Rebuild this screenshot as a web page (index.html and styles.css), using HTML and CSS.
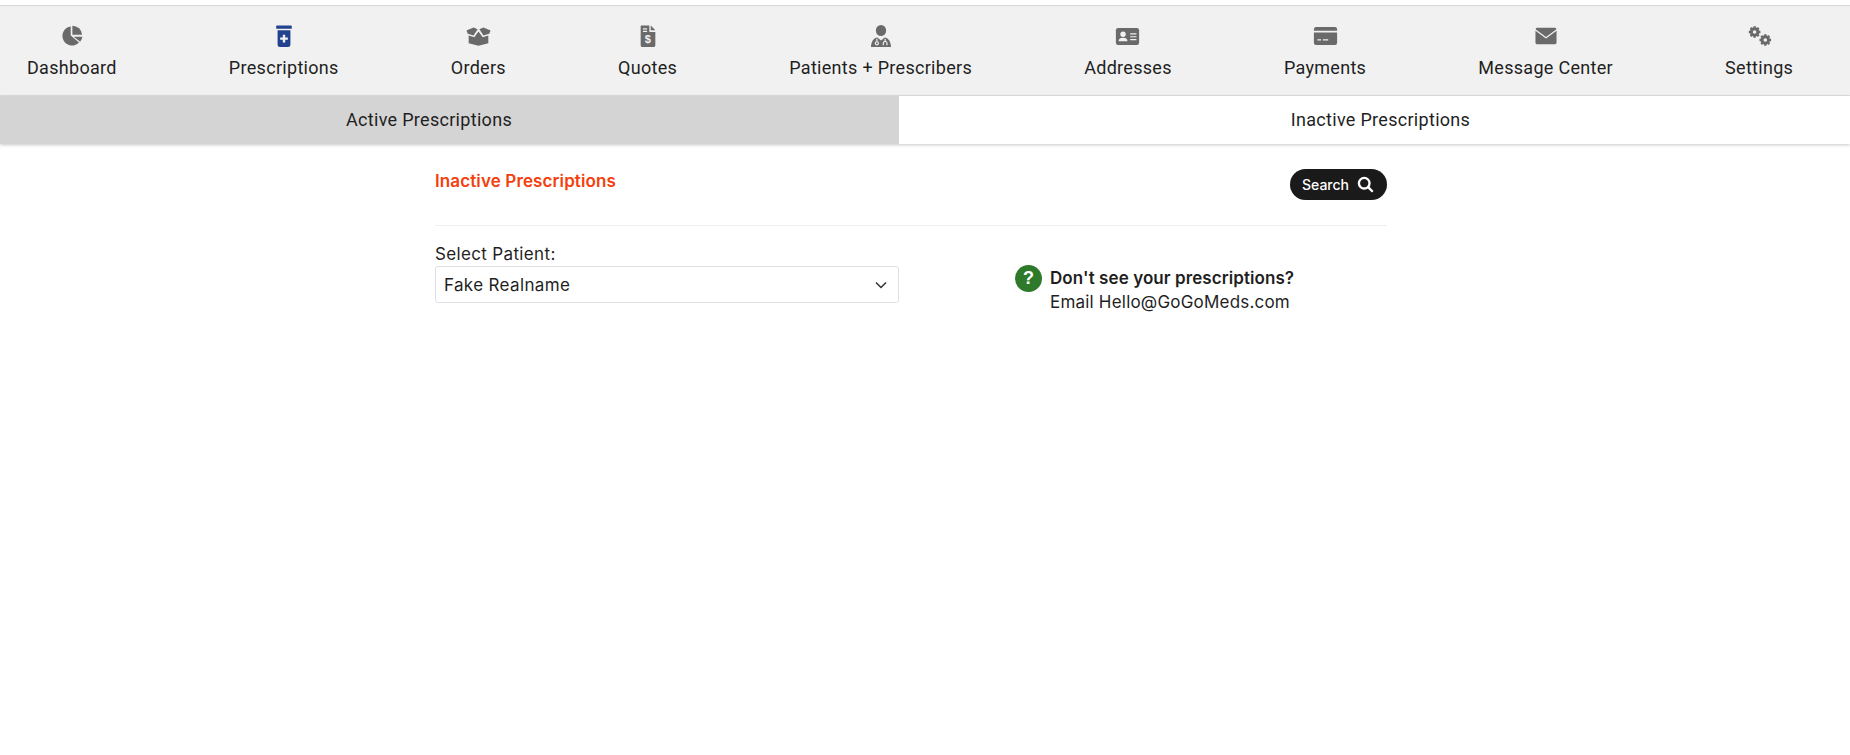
FILE: index.html
```html
<!DOCTYPE html>
<html lang="en">
<head>
<meta charset="utf-8">
<title>Inactive Prescriptions</title>
<link rel="stylesheet" href="styles.css">
</head>
<body>
<nav class="nav">
  <a class="nav-item"><svg class="icon" viewBox="0 0 24 24"><path d="M10.600 1.500A10.500 10.500 0 1 0 19.600 19.200L10.600 11.500Z"/><path d="M12.400 0.800A10.600 10.600 0 0 1 23 10.600H12.400Z"/><path d="M13.800 12.800H23.400A10.600 10.600 0 0 1 20.900 18.200Z"/></svg><span>Dashboard</span></a>
  <a class="nav-item active"><svg class="icon" viewBox="0 0 24 24"><rect x="3.500" y="0.500" width="17" height="3.600" rx="0.600"/><path d="M5 5.600H19V21.500A2.500 2.500 0 0 1 16.500 24H7.500A2.500 2.500 0 0 1 5 21.500Z"/><path class="cut" d="M10.700 10.500H13.300V13.500H16.200V16.100H13.300V19H10.700V16.100H7.800V13.500H10.700Z"/></svg><span>Prescriptions</span></a>
  <a class="nav-item"><svg class="icon icon-wide" viewBox="0 0 28 24"><path d="M1 5.500 8.500 2.500 13 4.500 8.500 11.500 2 9.500 0.600 6Z"/><path d="M27 5.500 19.500 2.500 15 4.500 19.500 11.500 26 9.500 27.400 6Z"/><path d="M3 11.500 9.300 13.400 14 7 18.700 13.400 25 11.500V20L14 23 3 20Z"/></svg><span>Orders</span></a>
  <a class="nav-item"><svg class="icon" viewBox="0 0 24 24"><path d="M4.500 0.500H13.500V7.500H20V22A2 2 0 0 1 18 24H6A2 2 0 0 1 4 22V1Z"/><path d="M15 0.500 20 5.800H15Z"/><path class="cut" d="M6.500 3.500H11V4.800H6.500ZM6.500 6.300H11V7.600H6.500Z"/><text class="dollar" x="12" y="20">$</text></svg><span>Quotes</span></a>
  <a class="nav-item"><svg class="icon" viewBox="0 0 24 24"><ellipse cx="12" cy="6" rx="5.600" ry="6"/><path d="M8 13.500 12 17 16 13.500C20 14 22.500 17.500 23 24H1C1.500 17.500 4 14 8 13.500Z"/><path class="cut-line" d="M7.500 15V18M16.500 15V18"/><circle class="cut-line" cx="7.500" cy="20" r="1.700"/><path class="cut-line" d="M14.500 22V20A2 2 0 0 1 18.500 20V22"/></svg><span>Patients + Prescribers</span></a>
  <a class="nav-item"><svg class="icon icon-wide" viewBox="0 0 28 24"><rect x="1" y="3" width="26" height="19" rx="2.500"/><circle class="cut" cx="9" cy="10" r="3"/><path class="cut" d="M4 18C4 15 6 14 9 14S14 15 14 18Z"/><path class="cut" d="M17 9H24V10.300H17ZM17 12.200H24V13.500H17ZM17 15.400H24V16.700H17Z"/></svg><span>Addresses</span></a>
  <a class="nav-item"><svg class="icon icon-wide" viewBox="0 0 28 24"><path d="M3.500 2H24.500A2.500 2.500 0 0 1 27 4.500V6H1V4.500A2.500 2.500 0 0 1 3.500 2Z"/><path d="M1 8H27V19.500A2.500 2.500 0 0 1 24.500 22H3.500A2.500 2.500 0 0 1 1 19.500Z"/><path class="cut" d="M5 15.500H9V17H5ZM11 15.500H17V17H11Z"/></svg><span>Payments</span></a>
  <a class="nav-item"><svg class="icon icon-env" viewBox="0 0 24 20"><path d="M2.500 1H21.500A2 2 0 0 1 23.400 2.500L12 11 0.600 2.500A2 2 0 0 1 2.500 1Z"/><path d="M0.500 4.300 12 12.800 23.500 4.300V17A2 2 0 0 1 21.500 19H2.500A2 2 0 0 1 0.500 17Z"/></svg><span>Message Center</span></a>
  <a class="nav-item"><svg class="icon icon-wide" viewBox="0 0 28 24"><g class="gear"><circle cx="8.500" cy="7.500" r="4"/><path d="M8.500 1V14M2 7.500H15M3.900 2.900 13.100 12.100M13.100 2.900 3.900 12.100"/></g><g class="gear"><circle cx="20.500" cy="16.500" r="4"/><path d="M20.500 10V23M14 16.500H27M15.900 11.900 25.100 21.100M25.100 11.900 15.900 21.100"/></g><circle class="cut" cx="8.500" cy="7.500" r="2"/><circle class="cut" cx="20.500" cy="16.500" r="2"/></svg><span>Settings</span></a>
</nav>
<div class="tabs">
  <a class="tab tab-off">Active Prescriptions</a>
  <a class="tab tab-on">Inactive Prescriptions</a>
</div>
<main class="content">
  <header class="head">
    <h1 class="title">Inactive Prescriptions</h1>
    <button class="search" type="button">Search
      <svg class="search-icon" viewBox="0 0 16 16"><circle cx="6.800" cy="6.800" r="5"/><path d="M10.500 10.500 14.800 14.800"/></svg>
    </button>
  </header>
  <section class="row">
    <div class="field">
      <label class="label">Select Patient:</label>
      <div class="select"><span>Fake Realname</span><svg class="chev" viewBox="0 0 12 8"><path d="M1 1.500 6 6.500 11 1.500"/></svg></div>
    </div>
    <div class="help">
      <span class="help-badge">?</span>
      <div class="help-text"><strong>Don't see your prescriptions?</strong><span>Email Hello@GoGoMeds.com</span></div>
    </div>
  </section>
</main>
</body>
</html>
```
FILE: styles.css
```css
* { box-sizing: border-box; }
html, body { margin: 0; background: #fff; }
body { font-family: Inter, "Liberation Sans", sans-serif; color: #1f1f1f; height: 755px; overflow: hidden; padding-top: 5px; }
.nav { display: flex; gap: 112.100px; height: 91px; padding: 0 0 0 27px; background: #f1f1f1; border-top: 1px solid #d6d6d6; border-bottom: 1px solid #e0e0e0; }
.nav-item { display: flex; flex-direction: column; align-items: center; padding-top: 19px; font-family: Roboto, sans-serif; font-size: 18px; letter-spacing: 0.3px; color: #1f1f1f; white-space: nowrap; }
.nav-item span { margin-top: 9px; line-height: 24px; }
.icon { width: 22px; height: 22px; fill: #6a6a6a; }
.icon-wide { width: 25px; }
.icon-env { width: 22px; }
.active .icon { fill: #22428f; }
.cut { fill: #f1f1f1; }
.cut-line { fill: none; stroke: #f1f1f1; stroke-width: 1.300; }
.dollar { fill: #f1f1f1; font-family: "Liberation Sans", sans-serif; font-size: 12px; font-weight: 700; text-anchor: middle; }
.gear { stroke: #6a6a6a; stroke-width: 2.600; }
.tabs { display: flex; height: 48px; box-shadow: 0 1px 3px rgba(0,0,0,.22); }
.tab { display: flex; align-items: center; justify-content: center; padding-bottom: 2px; font-family: Roboto, sans-serif; font-size: 18px; letter-spacing: 0.3px; }
.tab-off { width: 899px; padding-right: 41px; background: #d4d4d4; }
.tab-on { flex: 1; padding-left: 12px; background: #fff; }
.content { width: 952px; margin-left: 435px; }
.head { display: flex; justify-content: space-between; align-items: flex-start; height: 82px; padding-top: 25px; border-bottom: 1px solid #efefef; }
.title { margin: 1px 0 0; font-size: 17px; font-weight: 600; line-height: 22px; letter-spacing: 0.12px; color: #f4400c; }
.search { display: flex; align-items: center; gap: 8px; width: 97px; height: 31px; margin: 0; padding: 0 0 0 12px; border: 0; border-radius: 16px; background: #1a1a1a; color: #fff; font: 500 14px Inter, sans-serif; }
.search-icon { width: 17px; height: 17px; fill: none; stroke: #fff; stroke-width: 2.200; }
.row { display: flex; padding-top: 18px; }
.field { width: 464px; }
.label { display: block; font-size: 17px; line-height: 21px; letter-spacing: 0.35px; }
.select { display: flex; align-items: center; justify-content: space-between; height: 37px; margin-top: 1px; padding: 0 11px 0 8px; border: 1px solid #dfe1e6; border-radius: 3px; font-size: 17px; letter-spacing: 0.35px; }
.chev { width: 12px; height: 8px; fill: none; stroke: #333; stroke-width: 1.500; }
.help { display: flex; gap: 8px; margin: 21px 0 0 116px; }
.help-badge { display: flex; align-items: center; justify-content: center; width: 27px; height: 27px; border-radius: 50%; background: #2f7a2a; color: #fff; font: 700 18px "Liberation Sans", sans-serif; }
.help-text { display: flex; flex-direction: column; margin-top: 1px; font-size: 17px; line-height: 24px; letter-spacing: 0.2px; }
.help-text strong { font-weight: 600; letter-spacing: 0.08px; }
```
